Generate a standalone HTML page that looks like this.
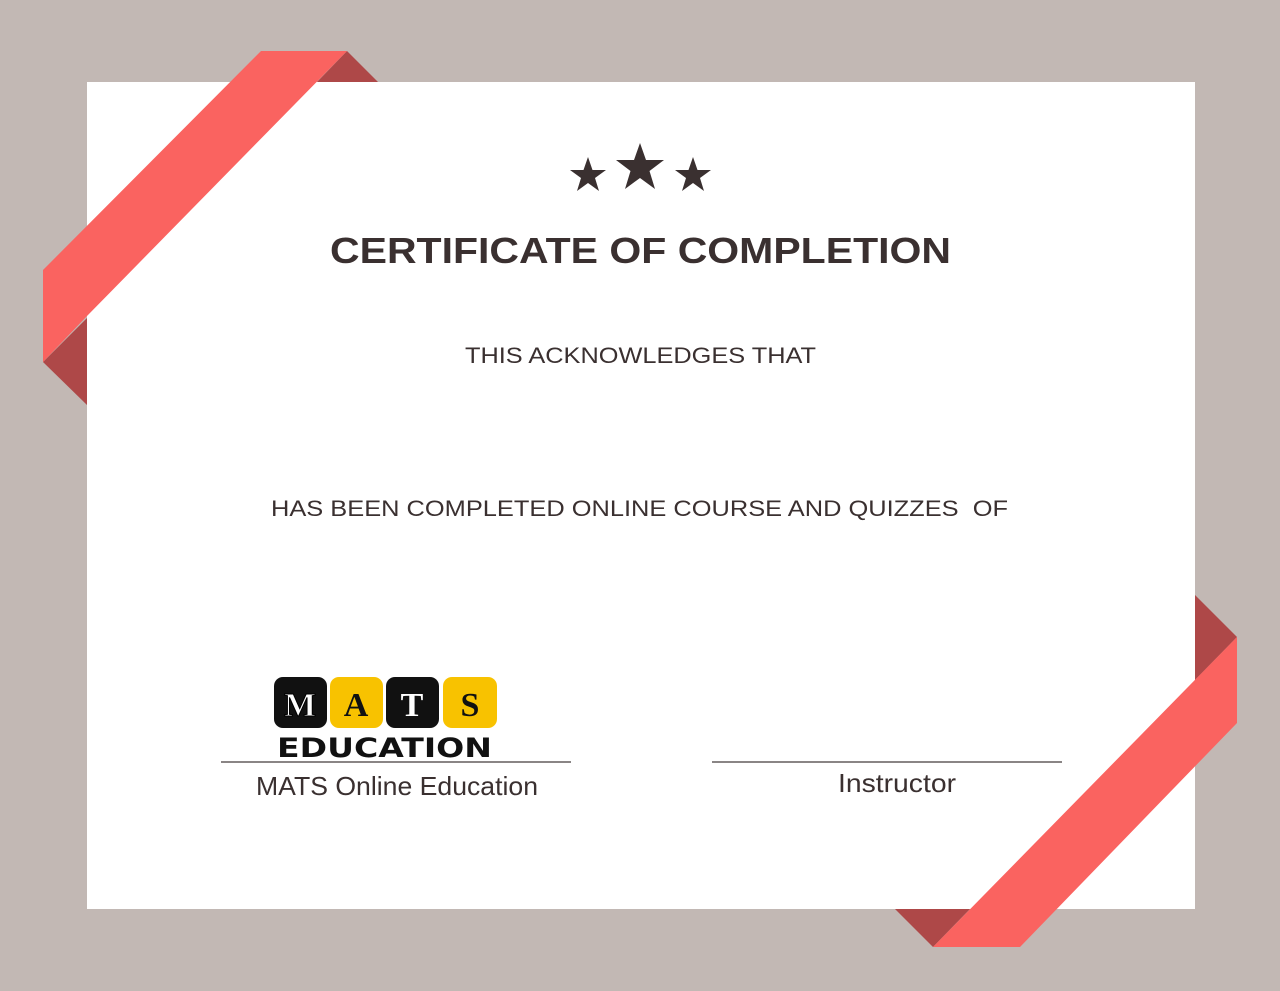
<!DOCTYPE html>
<html><head><meta charset="utf-8"><style>html,body{margin:0;padding:0;background:#c2b8b4}svg{display:block}</style></head>
<body>
<svg width="1280" height="991" viewBox="0 0 1280 991" xmlns="http://www.w3.org/2000/svg">
<rect width="1280" height="991" fill="#c2b8b4"/>
<rect x="87" y="82" width="1108" height="827" fill="#fff"/>
<polygon points="347,51 378,82 317,82" fill="#ae4848"/>
<polygon points="43,362 87,318 87,405" fill="#ae4848"/>
<polygon points="261,51 347,51 87,316 43,362 43,270" fill="#fa6360"/>
<polygon points="1195,595 1237,637 1195,680" fill="#ae4848"/>
<polygon points="895,909 970,909 933,947" fill="#ae4848"/>
<polygon points="1237,637 1237,723 1020,947 933,947" fill="#fa6360"/>
<g fill="#3a3030">
<polygon points="588,157 592.5,170 606,170 595,178 599,191 588,183 577,191 581,178 570,170 583.5,170"/>
<polygon points="640,143 646,160 664,160 649.5,171 655,189 640,178 625,189 630.5,171 616,160 634,160"/>
<polygon points="693,157 697.5,170 711,170 700,178 704,191 693,183 682,191 686,178 675,170 688.5,170"/>
</g>
<g font-family="Liberation Sans, sans-serif" fill="#3a3030">
<text x="330" y="263" font-size="36" font-weight="bold" textLength="621" lengthAdjust="spacingAndGlyphs">CERTIFICATE OF COMPLETION</text>
<text x="465" y="363" font-size="22" textLength="351" lengthAdjust="spacingAndGlyphs">THIS ACKNOWLEDGES THAT</text>
<text x="271" y="516" font-size="22" textLength="737" lengthAdjust="spacingAndGlyphs" xml:space="preserve">HAS BEEN COMPLETED ONLINE COURSE AND QUIZZES  OF</text>
<text x="256" y="795" font-size="26" textLength="282" lengthAdjust="spacingAndGlyphs">MATS Online Education</text>
<text x="838" y="792" font-size="26" textLength="118" lengthAdjust="spacingAndGlyphs">Instructor</text>
</g>
<rect x="221" y="761" width="350" height="2" fill="#8a8585"/>
<rect x="712" y="761" width="350" height="2" fill="#8a8585"/>
<rect x="274" y="677" width="53" height="51" rx="9" fill="#111"/>
<rect x="330" y="677" width="53" height="51" rx="9" fill="#f8c200"/>
<rect x="386" y="677" width="53" height="51" rx="9" fill="#111"/>
<rect x="443" y="677" width="54" height="51" rx="9" fill="#f8c200"/>
<g font-family="Liberation Serif, serif" font-weight="bold" font-size="34" text-anchor="middle">
<text x="300" y="716" fill="#fff" stroke="#000" stroke-width="1">M</text>
<text x="356" y="716" fill="#111">A</text>
<text x="412" y="716" fill="#fff">T</text>
<text x="470" y="716" fill="#111">S</text>
</g>
<text x="277" y="757" font-family="DejaVu Sans, sans-serif" font-weight="bold" font-size="27" fill="#111" textLength="215" lengthAdjust="spacingAndGlyphs">EDUCATION</text>
</svg>
</body></html>
